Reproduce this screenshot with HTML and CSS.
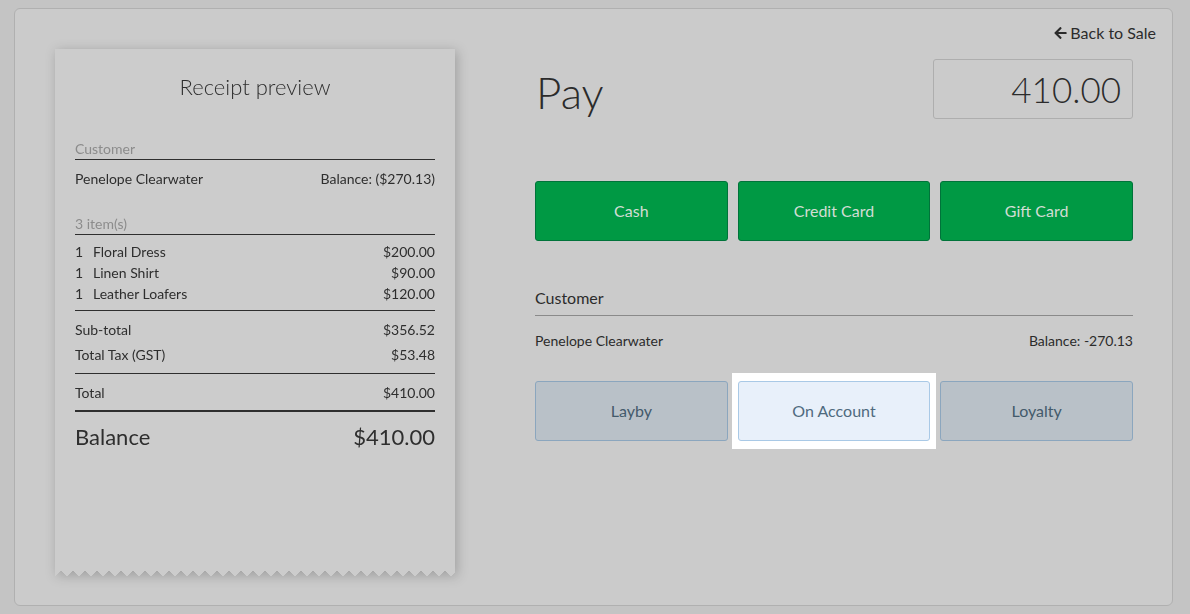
FILE: index.html
```html
<!DOCTYPE html>
<html lang="en">
<head>
<meta charset="utf-8">
<title>Pay</title>
<link rel="stylesheet" href="styles.css">
</head>
<body>
<div class="panel">
  <div class="topbar">
    <a class="back" href="#">
      <svg class="back-icon" viewBox="0 0 448 512" aria-hidden="true"><path d="M257.5 445.1l-22.2 22.2c-9.4 9.4-24.6 9.4-33.9 0L7 273c-9.4-9.4-9.4-24.6 0-33.9L201.4 44.7c9.4-9.4 24.6-9.4 33.9 0l22.2 22.2c9.5 9.5 9.3 25-.4 34.3L136.6 216H424c13.3 0 24 10.7 24 24v32c0 13.3-10.7 24-24 24H136.6l120.5 114.8c9.8 9.3 10 24.8.4 34.3z"/></svg>
      Back to Sale
    </a>
  </div>
  <div class="content">
    <div class="receipt">
      <h2 class="receipt-title">Receipt preview</h2>
      <div class="r-label">Customer</div>
      <div class="r-row r-customer"><span>Penelope Clearwater</span><span>Balance: ($270.13)</span></div>
      <div class="r-label r-label-items">3 item(s)</div>
      <div class="r-items">
        <div class="r-row"><span><span class="qty">1</span>Floral Dress</span><span>$200.00</span></div>
        <div class="r-row"><span><span class="qty">1</span>Linen Shirt</span><span>$90.00</span></div>
        <div class="r-row"><span><span class="qty">1</span>Leather Loafers</span><span>$120.00</span></div>
      </div>
      <div class="r-sums">
        <div class="r-row r-sum"><span>Sub-total</span><span>$356.52</span></div>
        <div class="r-row r-sum"><span>Total Tax (GST)</span><span>$53.48</span></div>
      </div>
      <div class="r-total">
        <div class="r-row r-sum"><span>Total</span><span>$410.00</span></div>
      </div>
      <div class="r-balance"><span>Balance</span><span>$410.00</span></div>
    </div>
    <div class="pay">
      <div class="pay-head">
        <h1 class="pay-title">Pay</h1>
        <div class="amount">410.00</div>
      </div>
      <div class="btn-row btn-row-main">
        <button class="btn btn-green">Cash</button>
        <button class="btn btn-green">Credit Card</button>
        <button class="btn btn-green">Gift Card</button>
      </div>
      <div class="cust-label">Customer</div>
      <div class="cust-row"><span>Penelope Clearwater</span><span>Balance: -270.13</span></div>
      <div class="btn-row btn-row-cust">
        <button class="btn btn-blue">Layby</button>
        <div class="highlight"><button class="btn btn-active">On Account</button></div>
        <button class="btn btn-blue">Loyalty</button>
      </div>
    </div>
  </div>
</div>
</body>
</html>
```
FILE: styles.css
```css
* { box-sizing: border-box; }
html, body { margin: 0; height: 100%; }
body {
  background: #c4c4c4;
  font-family: Lato, "Open Sans", "Liberation Sans", sans-serif;
  color: #2b2b2b;
  padding: 8px 17px 8px 14px;
}
.panel {
  height: 598px;
  background: #cbcbcb;
  border: 1px solid #b0b0b0;
  border-radius: 6px;
  display: flex;
  flex-direction: column;
}
.topbar {
  display: flex;
  justify-content: flex-end;
  padding: 14px 16px 0 0;
  height: 40px;
}
.back {
  color: #2b2b2b;
  text-decoration: none;
  font-size: 16px;
  line-height: 19px;
  display: flex;
  align-items: center;
  gap: 3px;
  height: 19px;
}
.back-icon { width: 13px; height: 14px; fill: #2b2b2b; }
.content {
  display: flex;
  gap: 80px;
  padding: 0 39px 0 40px;
}
.receipt {
  position: relative;
  width: 400px;
  height: 521px;
  background: #cccccc;
  padding: 24px 20px 0;
  filter: drop-shadow(2px 2px 6px rgba(0,0,0,0.22));
}
.receipt::after {
  content: "";
  position: absolute;
  left: 0;
  right: 0;
  bottom: -6px;
  height: 6px;
  background:
    linear-gradient(135deg, #cccccc 4.3px, transparent 4.3px) 0 0 / 12px 6px repeat-x,
    linear-gradient(225deg, #cccccc 4.3px, transparent 4.3px) 0 0 / 12px 6px repeat-x;
}
.receipt-title {
  margin: 0;
  text-align: center;
  font-weight: 300;
  font-size: 22px;
  line-height: 28px;
  color: #2e2e2e;
}
.r-label {
  margin-top: 40px;
  font-size: 14px;
  line-height: 16px;
  color: #8c8c8c;
  padding-bottom: 2px;
  border-bottom: 1px solid #2e2e2e;
}
.r-label-items { margin-top: 27px; }
.r-row {
  display: flex;
  justify-content: space-between;
  font-size: 14px;
  line-height: 21px;
  color: #2e2e2e;
}
.r-customer { padding-top: 8px; }
.qty { display: inline-block; width: 18px; }
.r-items {
  padding: 6px 0 6px;
  border-bottom: 1px solid #2e2e2e;
}
.r-sum { line-height: 25px; }
.r-sums {
  padding: 6px 0 6px;
  border-bottom: 1px solid #2e2e2e;
}
.r-total {
  padding: 6px 0 5px;
  border-bottom: 2px solid #2e2e2e;
}
.r-balance {
  display: flex;
  justify-content: space-between;
  font-size: 22px;
  line-height: 28px;
  padding-top: 11px;
  color: #2e2e2e;
}
.pay {
  width: 598px;
  padding-top: 10px;
}
.pay-head {
  display: flex;
  justify-content: space-between;
  align-items: center;
  height: 60px;
}
.pay-title {
  margin: 6px 0 0 1px;
  font-weight: 300;
  font-size: 44px;
  line-height: 60px;
  color: #2b2b2b;
}
.amount {
  width: 200px;
  height: 60px;
  border: 1px solid #aeaeae;
  border-radius: 3px;
  text-align: right;
  padding-right: 11px;
  font-weight: 300;
  font-size: 35px;
  line-height: 58px;
  color: #2b2b2b;
}
.btn-row {
  display: grid;
  grid-template-columns: repeat(3, 1fr);
  gap: 10px;
}
.btn-row-main { margin-top: 62px; }
.btn {
  height: 60px;
  border-radius: 3px;
  font-family: inherit;
  font-size: 16px;
  padding: 0 0 2px;
}
.btn-green {
  background: #009944;
  border: 1px solid #00733a;
  color: #d2ddd4;
}
.btn-blue {
  background: #b9c1c8;
  border: 1px solid #8ba6be;
  color: #435a6b;
}
.btn-active {
  width: 100%;
  background: #e8f0fa;
  border: 1px solid #a9c9e6;
  color: #4f6a7e;
}
.highlight {
  background: #ffffff;
  padding: 8px 6px;
  margin: -8px -6px;
}
.cust-label {
  margin-top: 48px;
  font-size: 16px;
  line-height: 18px;
  padding-bottom: 8px;
  border-bottom: 1px solid #8a8a8a;
  color: #2b2b2b;
}
.cust-row {
  display: flex;
  justify-content: space-between;
  font-size: 14px;
  line-height: 20px;
  padding-top: 15px;
  color: #2b2b2b;
}
.btn-row-cust { margin-top: 30px; }
```
